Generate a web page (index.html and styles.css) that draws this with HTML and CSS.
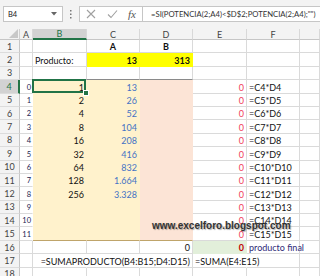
FILE: index.html
```html
<!doctype html>
<html lang="es">
<head>
  <meta charset="utf-8">
  <title>SUMAPRODUCTO</title>
  <link rel="stylesheet" href="styles.css">
</head>
<body>
	<div class="bar">
		<div class="namebox"><span>B4</span><svg width="6" height="4" viewBox="0 0 6 4"><path d="M0 0H6L3 3.5Z" fill="#666"/></svg></div>
		<div class="grip"><svg width="2" height="9" viewBox="0 0 2 9"><rect x="0" y="0" width="1.5" height="1.5" fill="#777"/><rect x="0" y="3.5" width="1.5" height="1.5" fill="#777"/><rect x="0" y="7" width="1.5" height="1.5" fill="#777"/></svg></div>
		<div class="tools">
			<svg width="10" height="10" viewBox="0 0 10 10"><path d="M1 1L9 9M9 1L1 9" stroke="#a0a0a0" stroke-width="1.1" fill="none"/></svg>
			<svg width="11" height="10" viewBox="0 0 11 10"><path d="M1 5.5L4 8.5L10 1.5" stroke="#a0a0a0" stroke-width="1.1" fill="none"/></svg>
			<span class="fx">fx</span>
		</div>
		<div class="formula">=SI(POTENCIA(2;A4)&lt;$D$2;POTENCIA(2;A4);"")</div>
	</div>

	<div class="sheet">
		<div class="corner"><svg width="9" height="9" viewBox="0 0 9 9"><path d="M9 0V9H0Z" fill="#c8c8c8"/></svg></div>
		<div class="ch">A</div>
		<div class="ch sel">B</div>
		<div class="ch">C</div>
		<div class="ch">D</div>
		<div class="ch">E</div>
		<div class="ch">F</div>
		<div class="ch"></div>

		<div class="rh">1</div>
		<div class="c"></div>
		<div class="c"></div>
		<div class="c m b">A</div>
		<div class="c m b">B</div>
		<div class="c"></div>
		<div class="c"></div>
		<div class="c"></div>

		<div class="rh">2</div>
		<div class="c"></div>
		<div class="c">Producto:</div>
		<div class="c r b ye">13</div>
		<div class="c r b ye">313</div>
		<div class="c"></div>
		<div class="c"></div>
		<div class="c"></div>

		<div class="rh">3</div>
		<div class="c"></div>
		<div class="c ul"></div>
		<div class="c ul"></div>
		<div class="c ul"></div>
		<div class="c"></div>
		<div class="c"></div>
		<div class="c"></div>

		<div class="rh sel">4</div>
		<div class="c r idx">0</div>
		<div class="c r cr cur">1</div>
		<div class="c r cr blu">13</div>
		<div class="c pe"></div>
		<div class="c r red">0</div>
		<div class="c">=C4*D4</div>
		<div class="c"></div>

		<div class="rh">5</div>
		<div class="c r idx">1</div>
		<div class="c r cr">2</div>
		<div class="c r cr blu">26</div>
		<div class="c pe"></div>
		<div class="c r red">0</div>
		<div class="c">=C5*D5</div>
		<div class="c"></div>

		<div class="rh">6</div>
		<div class="c r idx">2</div>
		<div class="c r cr">4</div>
		<div class="c r cr blu">52</div>
		<div class="c pe"></div>
		<div class="c r red">0</div>
		<div class="c">=C6*D6</div>
		<div class="c"></div>

		<div class="rh">7</div>
		<div class="c r idx">3</div>
		<div class="c r cr">8</div>
		<div class="c r cr blu">104</div>
		<div class="c pe"></div>
		<div class="c r red">0</div>
		<div class="c">=C7*D7</div>
		<div class="c"></div>

		<div class="rh">8</div>
		<div class="c r idx">4</div>
		<div class="c r cr">16</div>
		<div class="c r cr blu">208</div>
		<div class="c pe"></div>
		<div class="c r red">0</div>
		<div class="c">=C8*D8</div>
		<div class="c"></div>

		<div class="rh">9</div>
		<div class="c r idx">5</div>
		<div class="c r cr">32</div>
		<div class="c r cr blu">416</div>
		<div class="c pe"></div>
		<div class="c r red">0</div>
		<div class="c">=C9*D9</div>
		<div class="c"></div>

		<div class="rh">10</div>
		<div class="c r idx">6</div>
		<div class="c r cr">64</div>
		<div class="c r cr blu">832</div>
		<div class="c pe"></div>
		<div class="c r red">0</div>
		<div class="c">=C10*D10</div>
		<div class="c"></div>

		<div class="rh">11</div>
		<div class="c r idx">7</div>
		<div class="c r cr">128</div>
		<div class="c r cr blu">1.664</div>
		<div class="c pe"></div>
		<div class="c r red">0</div>
		<div class="c">=C11*D11</div>
		<div class="c"></div>

		<div class="rh">12</div>
		<div class="c r idx">8</div>
		<div class="c r cr">256</div>
		<div class="c r cr blu">3.328</div>
		<div class="c pe"></div>
		<div class="c r red">0</div>
		<div class="c">=C12*D12</div>
		<div class="c"></div>

		<div class="rh">13</div>
		<div class="c r idx">9</div>
		<div class="c cr"></div>
		<div class="c cr"></div>
		<div class="c pe"></div>
		<div class="c r red">0</div>
		<div class="c">=C13*D13</div>
		<div class="c"></div>

		<div class="rh">14</div>
		<div class="c r idx">10</div>
		<div class="c cr"></div>
		<div class="c cr"></div>
		<div class="c pe"></div>
		<div class="c r red">0</div>
		<div class="c">=C14*D14</div>
		<div class="c"></div>

		<div class="rh">15</div>
		<div class="c r idx">11</div>
		<div class="c cr tan"></div>
		<div class="c cr tan"></div>
		<div class="c pe tan"></div>
		<div class="c r red">0</div>
		<div class="c">=C15*D15</div>
		<div class="c"></div>

		<div class="rh">16</div>
		<div class="c"></div>
		<div class="c"></div>
		<div class="c"></div>
		<div class="c r">0</div>
		<div class="c r b gr dr">0</div>
		<div class="c nav">producto final</div>
		<div class="c"></div>

		<div class="rh">17</div>
		<div class="c"></div>
		<div class="c nr"></div>
		<div class="c nr"></div>
		<div class="c r">=SUMAPRODUCTO(B4:B15;D4:D15)</div>
		<div class="c nr">=SUMA(E4:E15)</div>
		<div class="c"></div>
		<div class="c"></div>

		<div class="rh">18</div>
		<div class="c"></div>
		<div class="c"></div>
		<div class="c"></div>
		<div class="c"></div>
		<div class="c"></div>
		<div class="c"></div>
		<div class="c"></div>

		<div class="mark">www.excelforo.blogspot.com</div>
	</div>
</body>
</html>
```

FILE: styles.css
```css
html,body{
	margin:0; padding:0;
	width:320px; height:276px;
	overflow:hidden;
	background:#fff;
	font-family: Lato, "Liberation Sans", sans-serif;
}

/* formula bar */
.bar{
	display:flex;
	height:29px;
	box-sizing:border-box;
	padding:6px 0 0 3px;
	background:#f3f3f3;
}
.namebox{
	width:60px; height:16px;
	box-sizing:border-box;
	border:1px solid #c6c6c6;
	background:#fff;
	display:flex;
	align-items:center;
	justify-content:space-between;
	padding:0 5px 0 4px;
	font-size:7.5px;
	color:#222;
}
.grip{
	width:16px; height:16px;
	display:flex;
	align-items:center;
	justify-content:center;
}
.tools{
	width:64px; height:16px;
	box-sizing:border-box;
	border:1px solid #c6c6c6;
	background:#fff;
	display:flex;
	align-items:center;
	padding-left:6px;
	gap:11px;
}
.fx{
	font-family:"Liberation Serif", serif;
	font-style:italic;
	font-size:11px;
	color:#555;
	margin-left:-1px;
}
.formula{
	flex:1;
	height:16px;
	box-sizing:border-box;
	border:1px solid #c6c6c6;
	border-right:none;
	margin-left:-1px;
	background:#fff;
	padding-left:8px;
	display:flex;
	align-items:center;
	white-space:nowrap;
	overflow:hidden;
	font-size:7.7px;
	color:#333;
}

/* grid */
.sheet{
	position:relative;
	display:grid;
	grid-template-columns:20px 13px 54px 53px 53px 54px 53px 20px;
	grid-template-rows:11px repeat(18, 13.4px);
	font-size:9px;
	color:#111;
}
.corner{
	background:#f3f3f3;
	border-right:1px solid #d0d0d0;
	border-bottom:1px solid #c6c6c6;
	display:flex;
	align-items:flex-end;
	justify-content:flex-end;
	padding:0 1px 1px 0;
}
.ch{
	background:#f3f3f3;
	border-right:1px solid #d8d8d8;
	border-bottom:1px solid #c6c6c6;
	color:#444;
	font-size:9px;
	display:flex;
	align-items:center;
	justify-content:center;
}
.ch.sel{ background:#d2d2d2; color:#217346; border-bottom:2px solid #217346; }
.rh{
	background:#f3f3f3;
	border-right:1px solid #c6c6c6;
	border-bottom:1px solid #dcdcdc;
	color:#444;
	font-size:9px;
	display:flex;
	align-items:center;
	justify-content:center;
}
.rh.sel{ background:#d2d2d2; color:#217346; border-right:2px solid #217346; }

.c{
	box-sizing:border-box;
	border-right:1px solid #dadada;
	border-bottom:1px solid #dadada;
	display:flex;
	align-items:flex-end;
	padding:0 2px;
	line-height:11px;
	white-space:nowrap;
}
.r{ justify-content:flex-end; }
.m{ justify-content:center; }
.b{ font-weight:bold; }
.nr{ border-right-color:transparent; }

.ye{ background:#ffff00; border-color:transparent; }
.cr{ background:#fff2cc; border-color:transparent; }
.pe{ background:#fce4d6; border-color:transparent; }
.gr{ background:#e2efda; border-color:transparent; }
.ul{ border-bottom-color:#8a8a8a; }
.tan{ border-bottom-color:#bfa46a; }

.idx{ font-size:7.5px; color:#23234f; padding-right:1px; border-right-color:transparent; }
.blu{ color:#4472c4; }
.red{ color:#f0405a; }
.dr{ color:#c00000; }
.nav{ color:#2e2a78; }

/* active cell */
.cur{ position:relative; }
.cur::after{
	content:"";
	position:absolute;
	left:-1px; top:-1px; right:0; bottom:0;
	border:2px solid #217346;
}
.cur::before{
	content:"";
	position:absolute;
	right:-3px; bottom:-3px;
	width:4px; height:4px;
	background:#217346;
	border:1px solid #fff;
	z-index:1;
}

.mark{
	position:absolute;
	left:152px; top:191px;
	font:bold 10px/12px "Liberation Sans", Arial, sans-serif;
	color:#333;
	text-shadow:1px 1px 1px rgba(0,0,0,.3);
	white-space:nowrap;
}
```
